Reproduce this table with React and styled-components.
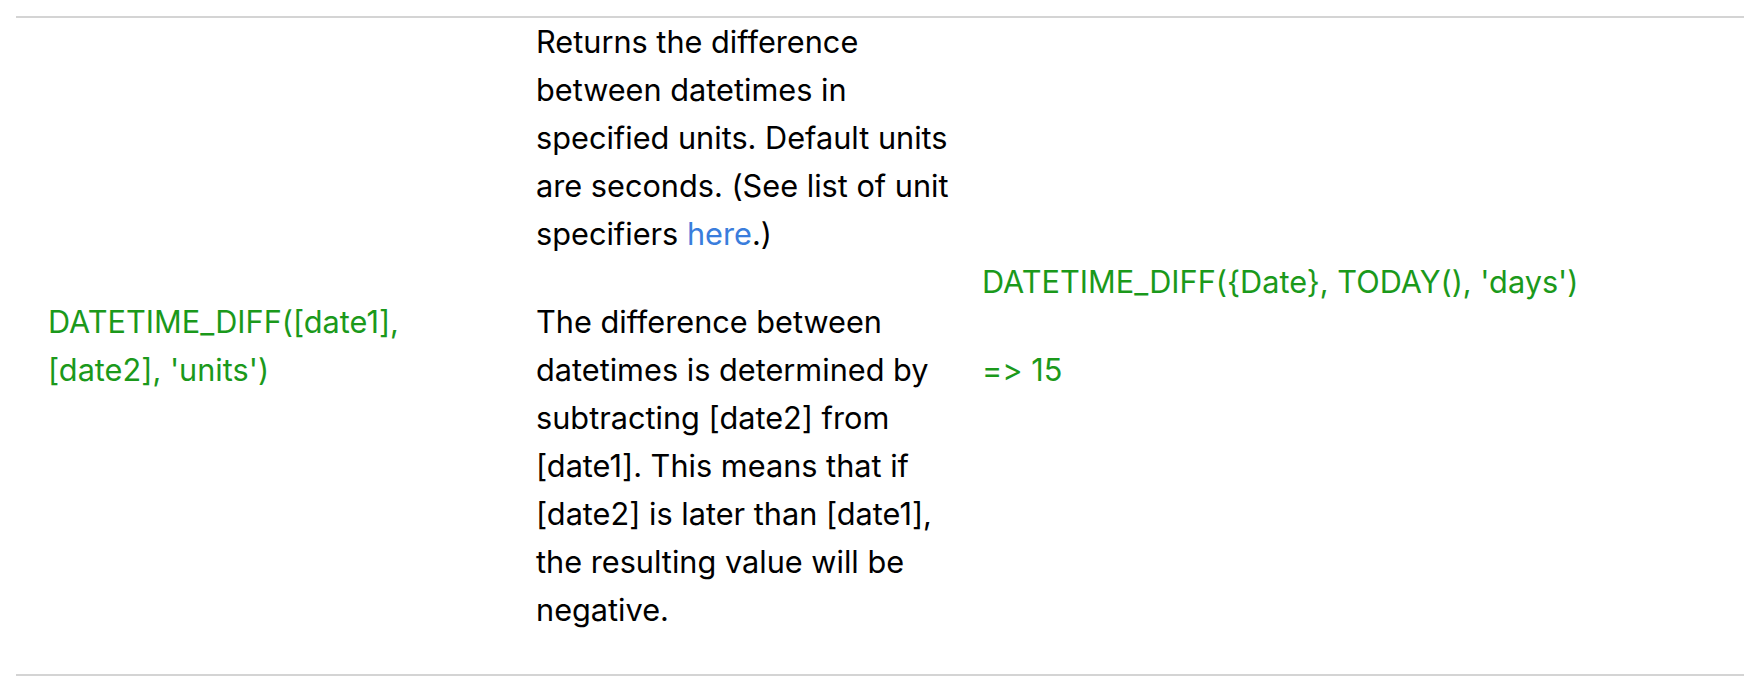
import React from "react";
import styled, { createGlobalStyle } from "styled-components";

const GlobalStyle = createGlobalStyle`
  html, body {
    margin: 0;
    padding: 0;
    background: #ffffff;
  }
  body {
    padding: 16px 0 0 16px;
    font-family: Inter, "Liberation Sans", Arial, sans-serif;
    font-variant-ligatures: none;
    font-feature-settings: "calt" 0, "liga" 0;
  }
`;

const Table = styled.table`
  width: 1728px;
  border-collapse: collapse;
  table-layout: fixed;
  font-size: 30.7px;
  line-height: 48px;
  color: #000000;
`;

const Row = styled.tr`
  border-top: 2px solid #d4d4d4;
  border-bottom: 2px solid #d4d4d4;
`;

const Cell = styled.td`
  box-sizing: border-box;
  width: ${(p) => p.$width}px;
  padding: 0 0 0 32px;
  vertical-align: middle;
  color: ${(p) => (p.$code ? "#1b991b" : "#000000")};
`;

const Para = styled.p`
  margin: 0 0 40px;
`;

const Link = styled.a`
  color: #3a7ddc;
  text-decoration: none;
`;

const App = () => (
  <>
    <GlobalStyle />
    <Table>
      <tbody>
        <Row>
          <Cell $width={488} $code>
            DATETIME_DIFF([date1], [date2], 'units')
          </Cell>
          <Cell $width={446}>
            <Para>
              Returns the difference between datetimes in specified units.
              Default units are seconds. (See list of unit specifiers{" "}
              <Link href="#">here</Link>.)
            </Para>
            <Para>
              The difference between datetimes is determined by subtracting
              [date2] from [date1]. This means that if [date2] is later than
              [date1], the resulting value will be negative.
            </Para>
          </Cell>
          <Cell $width={794} $code>
            <Para>DATETIME_DIFF({"{Date}"}, TODAY(), 'days')</Para>
            <Para>=&gt; 15</Para>
          </Cell>
        </Row>
      </tbody>
    </Table>
  </>
);

export default App;
